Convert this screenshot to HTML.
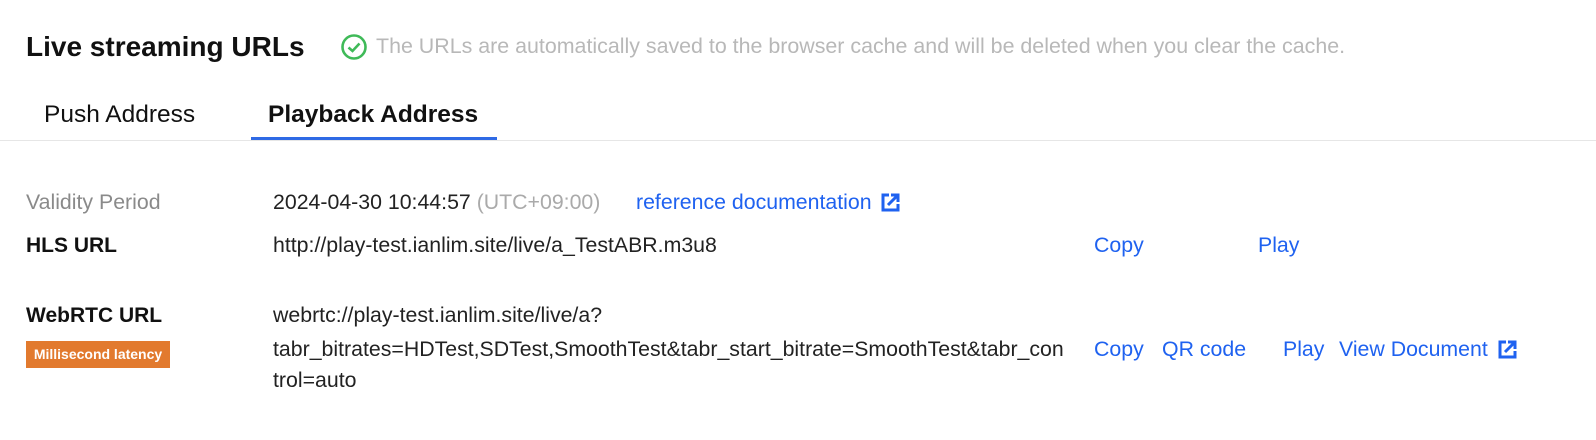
<!DOCTYPE html>
<html><head><meta charset="utf-8"><style>
body{margin:0;width:1596px;height:440px;background:#fff;font-family:"Liberation Sans",Arial,sans-serif;position:relative;overflow:hidden}
.a{position:absolute;white-space:nowrap;line-height:1}
.t{font-size:21.3px;color:#222}
.l{color:#1f62f0;font-size:21.3px}
.lbl{font-size:21px;font-weight:bold;color:#111}
</style></head><body>
<div class="a" style="left:26px;top:33px;font-size:28px;font-weight:bold;color:#111">Live streaming URLs</div>
<svg class="a" style="left:340px;top:33px" width="28" height="28" viewBox="0 0 28 28"><circle cx="14" cy="14" r="11.5" fill="none" stroke="#3fba58" stroke-width="2.6"/><path d="M8.5 14.5l4 3.5 7-7.5" fill="none" stroke="#3fba58" stroke-width="2.6"/></svg>
<div class="a" style="left:376px;top:36px;font-size:21.4px;color:#b8b8b8">The URLs are automatically saved to the browser cache and will be deleted when you clear the cache.</div>
<div class="a" style="left:44px;top:103px;font-size:24.5px;color:#111">Push Address</div>
<div class="a" style="left:268px;top:103px;font-size:24.5px;font-weight:bold;color:#111">Playback Address</div>
<div class="a" style="left:0;top:140px;width:1596px;height:1px;background:#e6e6e6"></div>
<div class="a" style="left:251px;top:137px;width:246px;height:3px;background:#2f6ae5"></div>
<div class="a t" style="left:26px;top:192px;color:#8a8a8a">Validity Period</div>
<div class="a t" style="left:273px;top:192px">2024-04-30 10:44:57 <span style="color:#aaa">(UTC+09:00)</span></div>
<div class="a l" style="left:636px;top:192px">reference documentation</div>
<svg class="a" style="left:881px;top:193px" width="19" height="19" viewBox="0 0 19 19"><path d="M8 2H2v15h15v-6" fill="none" stroke="#1f62f0" stroke-width="3"/><path d="M7 12L16 3M10 2h7v7" fill="none" stroke="#1f62f0" stroke-width="3"/></svg>
<div class="a lbl" style="left:26px;top:235px">HLS URL</div>
<div class="a t" style="left:273px;top:235px">http://play-test.ianlim.site/live/a_TestABR.m3u8</div>
<div class="a l" style="left:1094px;top:235px">Copy</div>
<div class="a l" style="left:1258px;top:235px">Play</div>
<div class="a lbl" style="left:26px;top:305px">WebRTC URL</div>
<div class="a" style="left:26px;top:341px;width:144px;height:27px;background:#e27a2e;color:#fff;font-size:14px;font-weight:bold;line-height:27px;text-align:center">Millisecond latency</div>
<div class="a t" style="left:273px;top:305px">webrtc://play-test.ianlim.site/live/a?</div>
<div class="a t" style="left:273px;top:339px">tabr_bitrates=HDTest,SDTest,SmoothTest&amp;tabr_start_bitrate=SmoothTest&amp;tabr_con</div>
<div class="a t" style="left:273px;top:370px">trol=auto</div>
<div class="a l" style="left:1094px;top:339px">Copy</div>
<div class="a l" style="left:1162px;top:339px">QR code</div>
<div class="a l" style="left:1283px;top:339px">Play</div>
<div class="a l" style="left:1339px;top:339px">View Document</div>
<svg class="a" style="left:1498px;top:340px" width="19" height="19" viewBox="0 0 19 19"><path d="M8 2H2v15h15v-6" fill="none" stroke="#1f62f0" stroke-width="3"/><path d="M7 12L16 3M10 2h7v7" fill="none" stroke="#1f62f0" stroke-width="3"/></svg>
</body></html>
